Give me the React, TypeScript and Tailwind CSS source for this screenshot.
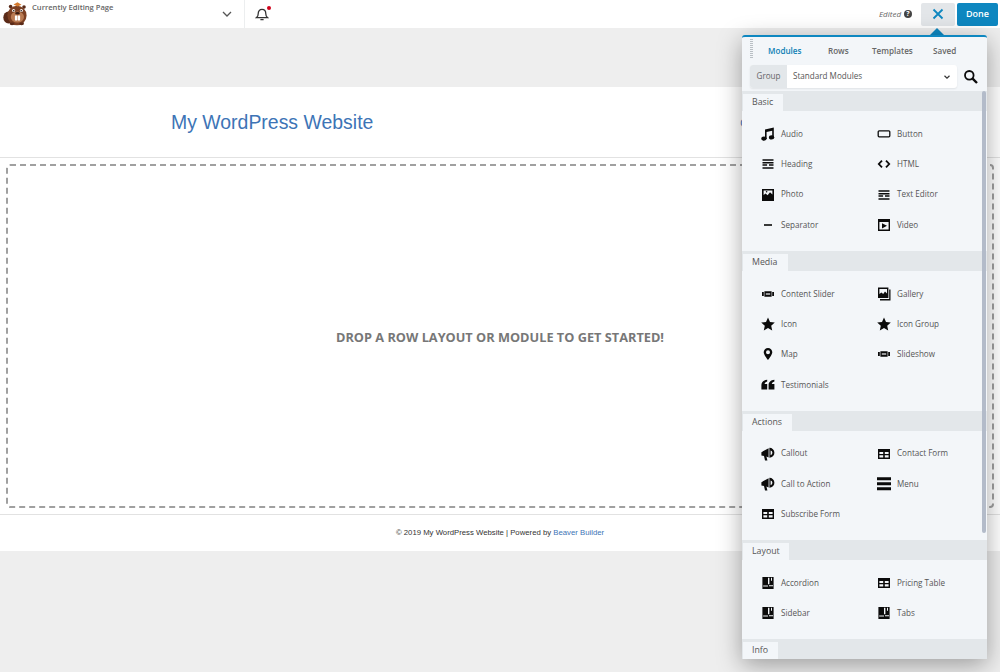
import React from "react";

type IconName =
  | "music" | "button" | "lines" | "code" | "photo" | "sep" | "video" | "slider" | "gallery"
  | "star" | "pin" | "quote" | "horn" | "table" | "menu" | "layout";

function Icon({ name }: { name: IconName }) {
  const common = { width: 14, height: 14, viewBox: "0 0 14 14", fill: "#0b0b0b" };
  switch (name) {
    case "music":
      return (
        <svg {...common}>
          <path d="M4 2.6 12.8.6V10.6H11.2V3.8L5.6 5V12H4Z" />
          <ellipse cx="3" cy="11.6" rx="2.7" ry="2.1" />
          <ellipse cx="10.6" cy="10.4" rx="2.7" ry="2.1" />
        </svg>
      );
    case "button":
      return (
        <svg {...common}>
          <rect x="1.2" y="3.8" width="11.6" height="6" rx="1" fill="none" stroke="#0b0b0b" strokeWidth="1.3" />
        </svg>
      );
    case "lines":
      return (
        <svg {...common}>
          <path d="M1.5 2.2h11v1.6h-11z M1.5 5h11v1.4h-11z M1.5 7.2h4.6v1.5H1.5z M8 7.2h4.5v1.5H8z M1.5 10.2h11v1.6h-11z" />
        </svg>
      );
    case "code":
      return (
        <svg {...common}>
          <path d="M5 3.6 1.8 7 5 10.4M9 3.6 12.2 7 9 10.4" fill="none" stroke="#0b0b0b" strokeWidth="1.8" />
        </svg>
      );
    case "photo":
      return (
        <svg {...common}>
          <path fillRule="evenodd" d="M1 1h12v12H1z M2.6 2.6V7l2-1.4 2 1.6 2.4-3 2.4 2.4V2.6z" />
          <circle cx="5.6" cy="3.8" r="0.8" />
        </svg>
      );
    case "sep":
      return (
        <svg {...common}>
          <rect x="3" y="6.2" width="8" height="1.6" />
        </svg>
      );
    case "video":
      return (
        <svg {...common}>
          <path fillRule="evenodd" d="M1 1h12v12H1z M2.4 4v7.6h9.2V4z M5 5.2 10 7.8 5 10.4z" />
        </svg>
      );
    case "slider":
      return (
        <svg {...common}>
          <path d="M3.4 4.2h7.2v5.6H3.4z M1 5h1.8v4H1z M11.2 5H13v4h-1.8z" />
          <rect x="4.8" y="6.4" width="4.4" height="1.2" fill="#f3f6f9" />
        </svg>
      );
    case "gallery":
      return (
        <svg {...common}>
          <path fillRule="evenodd" d="M1 .6h10.4v10.4H1z M2.4 2v5l2-1.6 1.8 1.6 1.8-2.6 2 2V2z" />
          <path d="M12.2 2.6h1.3V13.4H3V12.1h9.2z" />
        </svg>
      );
    case "star":
      return (
        <svg {...common}>
          <path d="M7 .6 9 5l4.8.5-3.6 3.2 1 4.8L7 11l-4.2 2.5 1-4.8L.2 5.5 5 5z" />
        </svg>
      );
    case "pin":
      return (
        <svg {...common}>
          <path fillRule="evenodd" d="M7 1a4.3 4.3 0 0 1 4.3 4.3C11.3 8 7 13 7 13S2.7 8 2.7 5.3A4.3 4.3 0 0 1 7 1z M7 3.3a2 2 0 1 0 0 4 2 2 0 0 0 0-4z" />
        </svg>
      );
    case "quote":
      return (
        <svg {...common}>
          <path d="M6.2 1.8v1.8C4.6 4 3.7 5 3.6 6h2.6v5.6H.4V7C.4 4.2 2.6 2.2 6.2 1.8z M13.4 1.8v1.8C11.8 4 10.9 5 10.8 6h2.6v5.6H7.6V7c0-2.8 2.2-4.8 5.8-5.2z" />
        </svg>
      );
    case "horn":
      return (
        <svg {...common}>
          <path d="M.4 5.2 7.6 1.2v9.4L5.4 9.6l1 4H4L3 9 .4 8.4z" />
          <path fillRule="evenodd" d="M8.4.8a5 5 0 0 1 0 10z M9.6 3.4v4.8a2.5 2.5 0 0 0 0-4.8z" />
        </svg>
      );
    case "table":
      return (
        <svg {...common}>
          <path fillRule="evenodd" d="M1 2h12v10H1z M2.4 5v2h3.8V5z M7.8 5v2h3.8V5z M2.4 8.2v2.4h3.8V8.2z M7.8 8.2v2.4h3.8V8.2z" />
        </svg>
      );
    case "menu":
      return (
        <svg {...common}>
          <path d="M0 .2h14v3H0z M0 5.2h14v3H0z M0 10.2h14v3H0z" />
        </svg>
      );
    case "layout":
      return (
        <svg {...common}>
          <path fillRule="evenodd" d="M1.4 1h11.2v12H1.4z M7 1.8v6.4H8.4V1.8z M10 1.8v3H11V1.8z M8 9.2v1H12v-1z M2.2 9.6v1H7v-1z" />
        </svg>
      );
  }
}

type Item = { label: string; icon: IconName };
type Section = { title: string; tab: string; items: Item[] };

const sections: Section[] = [
  {
    title: "Basic",
    tab: "w-[40px]",
    items: [
      { label: "Audio", icon: "music" },
      { label: "Button", icon: "button" },
      { label: "Heading", icon: "lines" },
      { label: "HTML", icon: "code" },
      { label: "Photo", icon: "photo" },
      { label: "Text Editor", icon: "lines" },
      { label: "Separator", icon: "sep" },
      { label: "Video", icon: "video" },
    ],
  },
  {
    title: "Media",
    tab: "w-[45px]",
    items: [
      { label: "Content Slider", icon: "slider" },
      { label: "Gallery", icon: "gallery" },
      { label: "Icon", icon: "star" },
      { label: "Icon Group", icon: "star" },
      { label: "Map", icon: "pin" },
      { label: "Slideshow", icon: "slider" },
      { label: "Testimonials", icon: "quote" },
    ],
  },
  {
    title: "Actions",
    tab: "w-[49px]",
    items: [
      { label: "Callout", icon: "horn" },
      { label: "Contact Form", icon: "table" },
      { label: "Call to Action", icon: "horn" },
      { label: "Menu", icon: "menu" },
      { label: "Subscribe Form", icon: "table" },
    ],
  },
  {
    title: "Layout",
    tab: "w-[46px]",
    items: [
      { label: "Accordion", icon: "layout" },
      { label: "Pricing Table", icon: "table" },
      { label: "Sidebar", icon: "layout" },
      { label: "Tabs", icon: "layout" },
    ],
  },
];

function SectionHeader({ title, tab }: { title: string; tab: string }) {
  return (
    <div className="h-[20px] bg-[#e3e7ea] pl-[1px] pt-[3px]">
      <div className={`h-[17px] bg-[#f3f6f9] pl-[9px] text-[8.8px] leading-[17px] text-[#555] ${tab}`}>{title}</div>
    </div>
  );
}

function Beaver() {
  return (
    <svg width="26" height="24" viewBox="0 0 26 24" className="shrink-0">
      <ellipse cx="5.5" cy="15.5" rx="5.2" ry="6" fill="#5a2a18" />
      <ellipse cx="14" cy="13.5" rx="9.6" ry="9.8" fill="#7c4023" />
      <circle cx="7.6" cy="4.6" r="1.8" fill="#5a2a18" />
      <circle cx="21" cy="5" r="1.8" fill="#5a2a18" />
      <path d="M10.5 2.6 14.5 0.3 18.5 2.8 14.5 4.6Z" fill="#d47a2e" />
      <ellipse cx="14.4" cy="15" rx="6.6" ry="5.6" fill="#b97a52" />
      <circle cx="10.6" cy="8.4" r="1.5" fill="#fff" />
      <circle cx="18.4" cy="8.4" r="1.5" fill="#fff" />
      <circle cx="10.8" cy="8.7" r="0.8" fill="#1d0f08" />
      <circle cx="18.2" cy="8.7" r="0.8" fill="#1d0f08" />
      <ellipse cx="14.5" cy="11.2" rx="2.4" ry="1.3" fill="#3a1b10" />
      <rect x="11.9" y="13.4" width="2.4" height="5" rx="0.4" fill="#fff" />
      <rect x="14.7" y="13.4" width="2.4" height="5" rx="0.4" fill="#fff" />
      <ellipse cx="9" cy="21.8" rx="2.4" ry="1.4" fill="#5a2a18" />
      <ellipse cx="18.6" cy="21.8" rx="2.4" ry="1.4" fill="#5a2a18" />
    </svg>
  );
}

function Panel() {
  return (
    <div className="absolute left-[742px] top-[35px] w-[245px] h-[624px] bg-[#f3f6f9] border-t-2 border-[#0e87c0] rounded-t-[3px] shadow-[0_6px_24px_rgba(0,0,0,0.35)] overflow-hidden">
      <div className="flex h-[28px]">
        <div className="w-[26px] flex justify-center pt-[2px]">
          <div className="w-[3px] h-[19px] ml-[-8px] bg-[repeating-linear-gradient(to_bottom,#b9bfc4_0,#b9bfc4_1px,transparent_1px,transparent_2px)]" />
        </div>
        <div className="flex items-center text-[8.1px] font-semibold text-[#666]">
          <span className="text-[#0e7fb5] w-[60px]">Modules</span>
          <span className="w-[44px]">Rows</span>
          <span className="w-[61px]">Templates</span>
          <span>Saved</span>
        </div>
      </div>
      <div className="flex items-center h-[23px] pl-[8px]">
        <div className="flex w-[207px] h-[23px] bg-white rounded-[3px] overflow-hidden items-center shadow-[0_1px_2px_rgba(0,0,0,0.08)]">
          <div className="w-[37px] h-full bg-[#e3e7ea] flex items-center justify-center text-[8.1px] text-[#666]">Group</div>
          <div className="flex-1 pl-[6px] text-[8.1px] text-[#555]">Standard Modules</div>
          <svg width="8" height="8" viewBox="0 0 8 8" className="mr-[6px]">
            <path d="M1.5 2.8 4 5.2 6.5 2.8" fill="none" stroke="#333" strokeWidth="1.2" />
          </svg>
        </div>
        <svg width="16" height="16" viewBox="0 0 16 16" className="ml-[6px]">
          <circle cx="6.3" cy="6.3" r="4.3" fill="none" stroke="#0b0b0b" strokeWidth="1.8" />
          <path d="M9.6 9.6 14 14" stroke="#0b0b0b" strokeWidth="2.4" />
        </svg>
      </div>
      <div className="relative mt-[3px]">
        <div className="absolute right-[1px] top-0 w-[4px] h-[442px] rounded-[2px] bg-[#b3bbc9]" />
        {sections.map((s) => (
          <div key={s.title}>
            <SectionHeader title={s.title} tab={s.tab} />
            <div className="grid grid-cols-[116px_116px] pl-[19px] pt-[7.8px] pb-[10.8px]">
              {s.items.map((it) => (
                <div key={it.label} className="flex items-center h-[30.3px]">
                  <span className="w-[14px] h-[14px] mr-[6px] flex items-center justify-center">
                    <Icon name={it.icon} />
                  </span>
                  <span className="text-[8.1px] text-[#555]">{it.label}</span>
                </div>
              ))}
            </div>
          </div>
        ))}
        <SectionHeader title="Info" tab="w-[35px]" />
      </div>
    </div>
  );
}

export default function App() {
  return (
    <div className="relative w-[1000px] h-[672px] overflow-hidden bg-[#eeeeee] font-['Open_Sans','Noto_Sans',sans-serif]">
      <div className="flex items-center h-[28px] bg-white">
        <div className="pl-[3px] flex w-[245px] h-full border-r border-[#eceeef] items-center">
          <Beaver />
          <div className="self-start pt-[1px] ml-[3px] text-[7.6px] leading-[12px] font-semibold text-[#666] w-[170px]">Currently Editing Page</div>
          <svg width="12" height="12" viewBox="0 0 12 12" className="ml-[19px]">
            <path d="M2 4 6 8 10 4" fill="none" stroke="#555" strokeWidth="1.3" />
          </svg>
        </div>
        <div className="relative ml-[10px] w-[14px] h-[14px]">
          <svg width="14" height="14" viewBox="0 0 14 14">
            <path d="M1.6 10.6c1-.8 1.6-1.6 1.6-3.8 0-2.6 1.4-4.4 3.8-4.4s3.8 1.8 3.8 4.4c0 2.2.6 3 1.6 3.8z" fill="none" stroke="#333" strokeWidth="1.3" />
            <path d="M5.4 12.6h3.2" stroke="#333" strokeWidth="1.3" />
          </svg>
          <span className="absolute right-[-2px] top-[-1px] w-[4px] h-[4px] rounded-full bg-[#d0021b]" />
        </div>
        <div className="ml-auto flex items-center pr-[2px]">
          <span className="text-[8px] italic text-[#666] mr-[3px]">Edited</span>
          <span className="w-[8px] h-[8px] rounded-full bg-[#444] text-white text-[7px] font-bold leading-[8px] text-center mr-[9px]">?</span>
          <div className="relative w-[34px] h-[23px] mr-[2px] bg-[#e3e6e9] rounded-[2px] flex items-center justify-center">
            <svg width="12" height="12" viewBox="0 0 12 12">
              <path d="M1.5 1.5 10.5 10.5M10.5 1.5 1.5 10.5" stroke="#0e87c0" strokeWidth="1.8" />
            </svg>
          </div>
          <div className="w-[41px] h-[23px] bg-[#0e87c0] rounded-[2px] text-white text-[9px] font-semibold flex items-center justify-center">Done</div>
        </div>
      </div>
      <div className="h-[59px]" />
      <div className="flex items-center h-[71px] bg-white border-b border-[#e2e2e2] pl-[171px] pt-[2px] font-['Liberation_Sans',sans-serif]">
        <span className="text-[19.45px] text-[#3d74b6]">My WordPress Website</span>
        <span className="ml-[367px] text-[10px] text-[#3d74b6]">Contact</span>
      </div>
      <div className="h-[357px] bg-white border-b border-[#e2e2e2] pt-[6px] px-[6px]">
        <div className="h-[344px] pt-[3px] border-2 border-dashed border-[#a0a0a0] rounded-[4px] flex items-center justify-center">
          <span className="text-[12.75px] font-bold text-[#777]">DROP A ROW LAYOUT OR MODULE TO GET STARTED!</span>
        </div>
      </div>
      <div className="h-[36px] bg-white flex items-center justify-center font-['Liberation_Sans',sans-serif] text-[7.75px] text-[#333]">
        <span>© 2019 My WordPress Website | Powered by <span className="text-[#3d74b6]">Beaver Builder</span></span>
      </div>
      <div className="absolute left-[930px] top-[28px] w-0 h-0 border-l-[7px] border-r-[7px] border-b-[7px] border-l-transparent border-r-transparent border-b-[#0e87c0]" />
      <Panel />
    </div>
  );
}
